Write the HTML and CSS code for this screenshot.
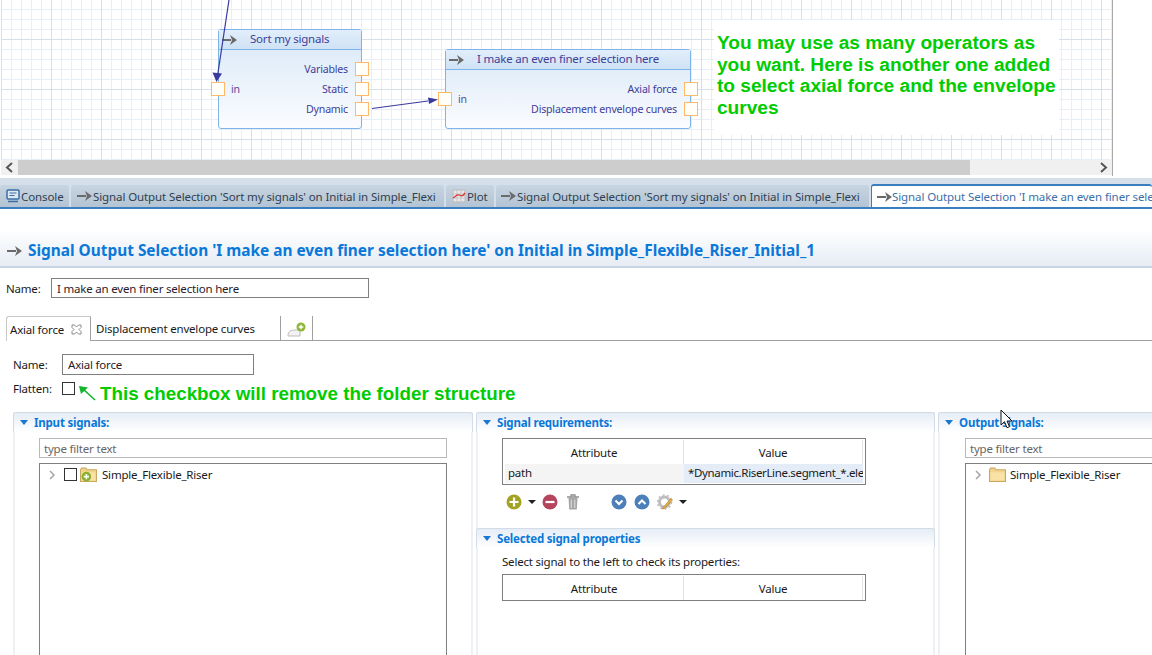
FILE: index.html
```html
<!DOCTYPE html>
<html lang="en">
<head>
<meta charset="utf-8">
<title>Signal Output Selection</title>
<link rel="stylesheet" href="styles.css">
</head>
<body>
<svg class="defs" width="0" height="0" aria-hidden="true">
  <symbol id="op" viewBox="0 0 16 12"><path d="M0 6h9" stroke="#6a6a6a" stroke-width="2"/><path d="M8 1l7 5-7 5 2-5z" fill="#6a6a6a"/></symbol>
  <symbol id="folder" viewBox="0 0 16 14"><path d="M.5 2.500l1-1.500h4l1 1.500h9v11H.5z" fill="#f3d58a" stroke="#c9a860"/><path d="M1.500 5h13v7.500h-13z" fill="#f8e2a6"/></symbol>
</svg>

<section class="canvas-pane">
  <div class="canvas">
    <svg class="wires" width="1112" height="160" aria-hidden="true">
      <path d="M229 0 217.500 76M372 108.500 428 101" stroke="#3a3a9e" stroke-width="1.200" fill="none"/>
      <path d="M216.500 82 212.500 72.500 222 73.500z M438 99.500 428 97.500 429 104z" fill="#3a3a9e"/>
    </svg>
    <div class="node node-sort">
      <div class="node-head"><svg class="op-icon"><use href="#op"/></svg><span class="node-title">Sort my signals</span></div>
      <div class="node-body">
        <div class="port-row"><i class="port port-in"></i><span class="in-label">in</span></div>
        <div class="out-col">
          <div class="port-row"><span>Variables</span><i class="port port-out"></i></div>
          <div class="port-row"><span>Static</span><i class="port port-out"></i></div>
          <div class="port-row"><span>Dynamic</span><i class="port port-out"></i></div>
        </div>
      </div>
    </div>
    <div class="node node-finer">
      <div class="node-head"><svg class="op-icon"><use href="#op"/></svg><span class="node-title">I make an even finer selection here</span></div>
      <div class="node-body">
        <div class="port-row"><i class="port port-in"></i><span class="in-label">in</span></div>
        <div class="out-col">
          <div class="port-row"><span>Axial force</span><i class="port port-out"></i></div>
          <div class="port-row"><span>Displacement envelope curves</span><i class="port port-out"></i></div>
        </div>
      </div>
    </div>
    <div class="note">You may use as many operators as you want. Here is another one added to select axial force and the envelope curves</div>
  </div>
  <div class="hscroll">
    <svg class="scroll-btn" viewBox="0 0 17 15" aria-hidden="true"><path d="M11 3 6 7.500l5 4.500" fill="none" stroke="#555" stroke-width="2"/></svg>
    <div class="thumb"></div>
    <div class="track"></div>
    <svg class="scroll-btn" viewBox="0 0 17 15" aria-hidden="true"><path d="M6 3l5 4.500L6 12" fill="none" stroke="#555" stroke-width="2"/></svg>
  </div>
</section>

<nav class="tabbar">
  <div class="vtab tab-console">
    <svg class="tab-icon" viewBox="0 0 14 14" aria-hidden="true"><rect x="1" y="1" width="12" height="9" rx="1" fill="#dfe8f2" stroke="#3a6ea5" stroke-width="1.500"/><path d="M3.500 4h7M3.500 6.500h5" stroke="#3a6ea5"/><path d="M2 12.500h10" stroke="#3a6ea5" stroke-width="1.500"/></svg>
    <span>Console</span>
  </div>
  <div class="vtab tab-sel"><svg class="op-icon"><use href="#op"/></svg><span>Signal Output Selection 'Sort my signals' on Initial in Simple_Flexi</span></div>
  <div class="vtab tab-plot">
    <svg class="tab-icon" viewBox="0 0 14 14" aria-hidden="true"><rect x="1" y="1" width="12" height="12" fill="#e8e8e8" stroke="#bbb"/><path d="M1 5h12M1 9h12M5 1v12M9 1v12" stroke="#bbb" stroke-width=".7"/><path d="M1 9c3-1 3-4 6-3s3 2 6-2" fill="none" stroke="#d33" stroke-width="1.300"/></svg>
    <span>Plot</span>
  </div>
  <div class="vtab tab-sel2"><svg class="op-icon"><use href="#op"/></svg><span>Signal Output Selection 'Sort my signals' on Initial in Simple_Flexi</span></div>
  <div class="vtab vtab-active"><svg class="op-icon"><use href="#op"/></svg><span>Signal Output Selection 'I make an even finer selection here' on Initial in Simple_Flexible_Riser_Initial_1</span></div>
</nav>

<header class="form-head">
  <svg class="op-icon"><use href="#op"/></svg>
  <h1>Signal Output Selection 'I make an even finer selection here' on Initial in Simple_Flexible_Riser_Initial_1</h1>
</header>

<div class="name-row">
  <span class="label">Name:</span>
  <div class="field field-main">I make an even finer selection here</div>
</div>

<div class="ftabs">
  <div class="ftab ftab-active"><span>Axial force</span>
    <svg class="close" viewBox="0 0 11 11" aria-hidden="true"><path d="M1 1h2.500l2 2 2-2H10v2.500l-2 2 2 2V10H7.500l-2-2-2 2H1V7.500l2-2-2-2z" fill="#fff" stroke="#8a8a8a"/></svg>
  </div>
  <div class="ftab ftab-second"><span>Displacement envelope curves</span></div>
  <div class="ftab ftab-add">
    <svg viewBox="0 0 20 16" width="20" height="16" aria-hidden="true"><path d="M1 14c0-5 3-6 8-6h4v6z" fill="#f2f2f2" stroke="#bdbdbd"/><circle cx="14" cy="5" r="4.500" fill="#8fb63a"/><path d="M14 2.700v4.600M11.700 5h4.600" stroke="#fff" stroke-width="1.400"/></svg>
  </div>
  <div class="ftab-rest"></div>
</div>

<div class="sub-name">
  <span class="label sub-label">Name:</span>
  <div class="field field-sub">Axial force</div>
</div>
<div class="flatten">
  <span class="label sub-label">Flatten:</span>
  <i class="check"></i>
  <svg class="hint-arrow" viewBox="0 0 18 16" aria-hidden="true"><path d="M17 15 5 4" stroke="#11b52a" stroke-width="1.600"/><path d="M1 1l9 1.500L3 9z" fill="#11b52a"/></svg>
  <span class="hint">This checkbox will remove the folder structure</span>
</div>

<main class="panels">
  <section class="panel panel-side">
    <h2 class="sec-head"><i class="twist"></i>Input signals:</h2>
    <div class="filter">type filter text</div>
    <div class="tree">
      <svg class="chev" viewBox="0 0 8 12" aria-hidden="true"><path d="M2 2l4 4-4 4" fill="none" stroke="#a5a5a5" stroke-width="1.500"/></svg>
      <i class="check tree-check"></i>
      <svg class="folder" viewBox="0 0 16 14" aria-hidden="true"><use href="#folder"/><circle cx="6" cy="9" r="4.500" fill="#8ab02f"/><path d="M6 6.500v5M3.500 9h5" stroke="#fff" stroke-width="1.500"/></svg>
      <span>Simple_Flexible_Riser</span>
    </div>
  </section>

  <section class="panel panel-mid">
    <div class="sec-req">
      <h2 class="sec-head"><i class="twist"></i>Signal requirements:</h2>
      <div class="table">
        <div class="th">Attribute</div><div class="th">Value</div>
        <div class="td td-attr">path</div><div class="td td-val">*Dynamic.RiserLine.segment_*.ele</div>
      </div>
      <div class="toolbar">
        <svg class="btn" viewBox="0 0 16 16" aria-hidden="true"><circle cx="8" cy="8" r="7.500" fill="#a3a322"/><path d="M8 3.500v9M3.500 8h9" stroke="#fff" stroke-width="2.200"/></svg>
        <i class="drop drop-add"></i>
        <svg class="btn btn-minus" viewBox="0 0 16 16" aria-hidden="true"><circle cx="8" cy="8" r="7.500" fill="#b5455c"/><path d="M3.500 8h9" stroke="#fff" stroke-width="2.200"/></svg>
        <svg class="btn btn-trash" viewBox="0 0 14 16" aria-hidden="true"><path d="M1 3h12M5 3V1h4v2" fill="none" stroke="#8f8f8f" stroke-width="1.300"/><path d="M2.500 4h9l-.7 11.500H3.200z" fill="#a5a5a5"/><path d="M5.300 5.500v8.500M8.700 5.500v8.500" stroke="#d8d8d8" stroke-width="1.200"/></svg>
        <svg class="btn btn-down" viewBox="0 0 16 16" aria-hidden="true"><circle cx="8" cy="8" r="7.500" fill="#4d80b8"/><path d="M4.500 6.500 8 10l3.500-3.500" fill="none" stroke="#fff" stroke-width="2"/></svg>
        <svg class="btn btn-up" viewBox="0 0 16 16" aria-hidden="true"><circle cx="8" cy="8" r="7.500" fill="#4d80b8"/><path d="M4.500 10 8 6.500l3.500 3.500" fill="none" stroke="#fff" stroke-width="2"/></svg>
        <svg class="btn btn-gear" viewBox="0 0 16 16" aria-hidden="true"><circle cx="7.500" cy="8" r="5" fill="none" stroke="#bdbdbd" stroke-width="3"/><circle cx="7.500" cy="8" r="7" fill="none" stroke="#bdbdbd" stroke-width="1.600" stroke-dasharray="2 2.400"/><path d="M6 13.500 14 4.500l1.500 1.500-8 8.500-2 .5z" fill="#e8b13c" stroke="#a9762a" stroke-width=".6"/></svg>
        <i class="drop"></i>
      </div>
    </div>
    <div class="sec-props">
      <h2 class="sec-head"><i class="twist"></i>Selected signal properties</h2>
      <p class="hint-line">Select signal to the left to check its properties:</p>
      <div class="table table-empty">
        <div class="th">Attribute</div><div class="th">Value</div>
      </div>
    </div>
  </section>

  <section class="panel panel-side">
    <h2 class="sec-head"><i class="twist"></i>Output signals:</h2>
    <div class="filter filter-out">type filter text</div>
    <div class="tree tree-out">
      <svg class="chev" viewBox="0 0 8 12" aria-hidden="true"><path d="M2 2l4 4-4 4" fill="none" stroke="#a5a5a5" stroke-width="1.500"/></svg>
      <svg class="folder" viewBox="0 0 16 14" aria-hidden="true"><use href="#folder"/></svg>
      <span>Simple_Flexible_Riser</span>
    </div>
  </section>
</main>

<svg class="cursor" viewBox="0 0 14 20" aria-hidden="true"><path d="M1 1v15l3.500-3.300 2.500 6 2.500-1-2.500-5.700H12z" fill="#fff" stroke="#111"/></svg>
</body>
</html>
```

FILE: styles.css
```css
* { box-sizing: border-box; }
html, body { margin: 0; padding: 0; width: 1152px; height: 655px; overflow: hidden; background: #fff; }
body { position: relative; font-family: "Noto Sans", "Open Sans", sans-serif; font-size: 11.5px; color: #1a1a1a; letter-spacing: -0.2px; }
.defs { position: absolute; }

/* diagram canvas */
.canvas-pane { width: 1113px; height: 176px; padding-left: 1px; border-right: 1px solid #a9a9a9; }
.canvas {
  position: relative; height: 160px; overflow: hidden; background-color: #fff;
  background-image:
    linear-gradient(to right, #d6dfea 1px, transparent 1px),
    linear-gradient(to bottom, #d6dfea 1px, transparent 1px),
    linear-gradient(to right, #e7eef6 1px, transparent 1px),
    linear-gradient(to bottom, #e7eef6 1px, transparent 1px);
  background-size: 50px 50px, 50px 50px, 10px 10px, 10px 10px;
  background-position: 0 39px, 0 39px, 0 9px, 0 9px;
}
.wires { position: absolute; left: -1px; top: 0; z-index: 3; }
.node { position: absolute; display: flex; flex-direction: column; border: 1px solid #7fb4e8; border-radius: 3px; color: #40409a; background: linear-gradient(#d8e8f8, #fbfcfe); }
.node-sort { left: 217px; top: 29px; width: 144px; height: 100px; }
.node-finer { left: 444px; top: 49px; width: 246px; height: 80px; }
.node-head { flex: none; display: flex; align-items: center; height: 20px; padding-left: 3px; border-bottom: 1px solid #7fb4e8; background: linear-gradient(#e2eefa, #cfe2f6); }
.op-icon { flex: none; width: 16px; height: 12px; }
.node-title { margin-left: 12px; padding-bottom: 2px; }
.node-body { flex: 1; display: flex; justify-content: space-between; align-items: center; font-size: 10.6px; }
.out-col { display: flex; flex-direction: column; gap: 6px; align-items: flex-end; }
.port-row { display: flex; align-items: center; gap: 7px; height: 14px; white-space: nowrap; }
.port { display: block; flex: none; width: 14px; height: 14px; border: 1px solid #ffb969; background: #fffef8; }
.port-in { margin-left: -8px; }
.port-out { margin-right: -8px; }
.in-label { color: #5a4a9a; margin-left: -1px; }
.note { position: absolute; left: 713px; top: 20px; width: 345px; height: 115px; padding: 12px 0 0 3px; background: #fff; color: #00cc00; font: bold 19.1px/21.6px "Liberation Sans", sans-serif; letter-spacing: 0; }

.hscroll { display: flex; height: 15px; background: #f0f0f0; }
.scroll-btn { flex: none; width: 17px; height: 15px; }
.thumb { flex: none; width: 952px; background: #cdcdcd; }
.track { flex: 1; }

/* view tabs */
.tabbar { display: flex; align-items: flex-end; gap: 2px; height: 31px; margin-top: 2px; background: #d4dfe9; border-bottom: 2px solid #3a7fbd; overflow: hidden; white-space: nowrap; color: #2f3f4f; letter-spacing: -0.1px; }
.vtab { flex: none; display: flex; align-items: center; height: 22px; padding-left: 6px; border-radius: 3px 3px 0 0; background: linear-gradient(#c7d4e1, #b4c4d4); overflow: hidden; }
.tab-icon { flex: none; width: 14px; height: 14px; margin-right: 1px; }
.tab-console { width: 69px; }
.tab-sel { width: 373px; }
.tab-plot { width: 48px; }
.tab-sel2 { width: 373px; padding-left: 5px; }
.vtab-active { flex: 1; height: 25px; margin-bottom: -2px; padding: 0 0 2px 5px; background: #fff; border-top: 2px solid #3a7fbd; border-left: 1px solid #3a7fbd; color: #3b6ea8; }
.vtab-active .op-icon { margin-right: -1px; }

/* form heading */
.form-head { display: flex; align-items: center; gap: 5px; height: 39px; margin-top: 20px; padding: 6px 0 0 7px; background: linear-gradient(#fff, #e6ecf5); border-bottom: 2px solid #c9d5e4; }
h1 { margin: 0; color: #0a78d8; font-size: 15.4px; font-weight: 700; letter-spacing: 0; white-space: nowrap; }

.name-row { display: flex; align-items: center; height: 20px; margin-top: 10px; padding-left: 6px; }
.label { width: 45px; flex: none; color: #1a1a1a; }
.field { height: 100%; padding: 1px 0 0 5px; border: 1px solid #7f7f7f; color: #2a1a2a; line-height: 17px; }
.field-main { width: 318px; }

.ftabs { display: flex; height: 25px; margin-top: 18px; padding-left: 6px; }
.ftab { flex: none; display: flex; align-items: center; height: 25px; border-right: 1px solid #a0a0a0; border-bottom: 1px solid #a0a0a0; }
.ftab-active { width: 85px; padding-left: 3px; gap: 7px; border-top: 1px solid #c9c9c9; border-left: 1px solid #c9c9c9; border-bottom: 0; border-radius: 3px 0 0 0; }
.close { width: 11px; height: 11px; flex: none; }
.ftab-second { width: 190px; padding-left: 5px; }
.ftab-add { width: 32px; justify-content: center; padding-top: 3px; }
.ftab-rest { flex: 1; border-bottom: 1px solid #a0a0a0; }

.sub-name { display: flex; align-items: center; height: 21px; margin-top: 13px; padding-left: 13px; }
.sub-label { width: 49px; }
.field-sub { width: 192px; }
.flatten { display: flex; align-items: center; height: 18px; margin-top: 4px; padding-left: 13px; }
.check { display: block; flex: none; width: 13px; height: 13px; border: 1px solid #333; background: #fff; }
.hint-arrow { flex: none; width: 18px; height: 16px; margin: 10px 0 0 3px; }
.hint { margin: 12px 0 0 4px; color: #00cc00; font: bold 18.8px/22px "Liberation Sans", sans-serif; letter-spacing: 0; white-space: nowrap; }

/* three panels */
.panels { display: flex; gap: 3px; margin-top: 15px; padding-left: 13px; height: 250px; }
.panel { flex: none; width: 460px; height: 100%; }
.panel-mid { display: flex; flex-direction: column; width: 459px; }
.panel-side, .sec-props { border-left: 2px solid #eef0f3; border-right: 2px solid #eef0f3; }
.sec-req { height: 116px; border-left: 2px solid #eef0f3; border-right: 2px solid #eef0f3; }
.sec-props { flex: 1; }
.sec-head { display: flex; align-items: center; gap: 6px; height: 20px; margin: 0 -2px; padding: 0 0 1px 6px; border: 1px solid #d2dce8; border-bottom: 0; border-radius: 3px 3px 0 0; background: linear-gradient(#e6edf5, #fff); color: #0a78d8; font-size: 11.5px; font-weight: 700; }
.twist { flex: none; width: 0; height: 0; border: 4px solid transparent; border-top: 5px solid #1878d0; border-bottom: 0; }
.filter { height: 20px; margin: 6px 0 0 24px; width: 408px; padding: 1px 0 0 4px; border: 1px solid #b8b8b8; color: #666; line-height: 17px; }
.filter-out { margin-left: 25px; }
.tree { display: flex; align-items: flex-start; height: 200px; width: 408px; margin: 5px 0 0 24px; padding: 3px 0 0 8px; border: 1px solid #7f7f7f; border-bottom: 0; white-space: nowrap; line-height: 15px; }
.tree-out { margin-left: 25px; }
.chev { flex: none; width: 8px; height: 12px; margin-top: 2px; }
.tree-check { margin: 1px 0 0 8px; }
.folder { flex: none; width: 17px; height: 15px; margin: 0 5px 0 3px; }
.tree-out .folder { margin: 0 4px 0 7px; }

.table { display: grid; grid-template-columns: 179px 1fr; width: 364px; height: 47px; margin: 6px 0 0 24px; padding: 1px 2px; border: 1px solid #7f7f7f; overflow: hidden; }
.th { display: flex; align-items: center; justify-content: center; height: 24px; border-right: 1px solid #e4e4e4; }
.td { height: 19px; padding-left: 3px; line-height: 18px; white-space: nowrap; overflow: hidden; }
.td-attr { background: #f4f4f4; }
.td-val { background: #e4edf7; padding-left: 4px; letter-spacing: -0.35px; }
.table-empty { height: 27px; margin-top: 0; }

.toolbar { display: flex; align-items: center; height: 16px; margin: 9px 0 0 28px; }
.btn { flex: none; width: 16px; height: 16px; }
.drop { flex: none; width: 0; height: 0; margin-left: 6px; border: 4px solid transparent; border-top: 4px solid #222; border-bottom: 0; }
.btn-minus { margin-left: 6px; }
.btn-trash { width: 14px; margin-left: 8px; }
.btn-down { margin-left: 31px; }
.btn-up { margin-left: 7px; }
.btn-gear { margin-left: 7px; }

.hint-line { margin: 0; padding: 6px 0 0 24px; height: 26px; color: #1a1a1a; }

.cursor { position: absolute; left: 1000px; top: 409px; width: 14px; height: 20px; }
```
